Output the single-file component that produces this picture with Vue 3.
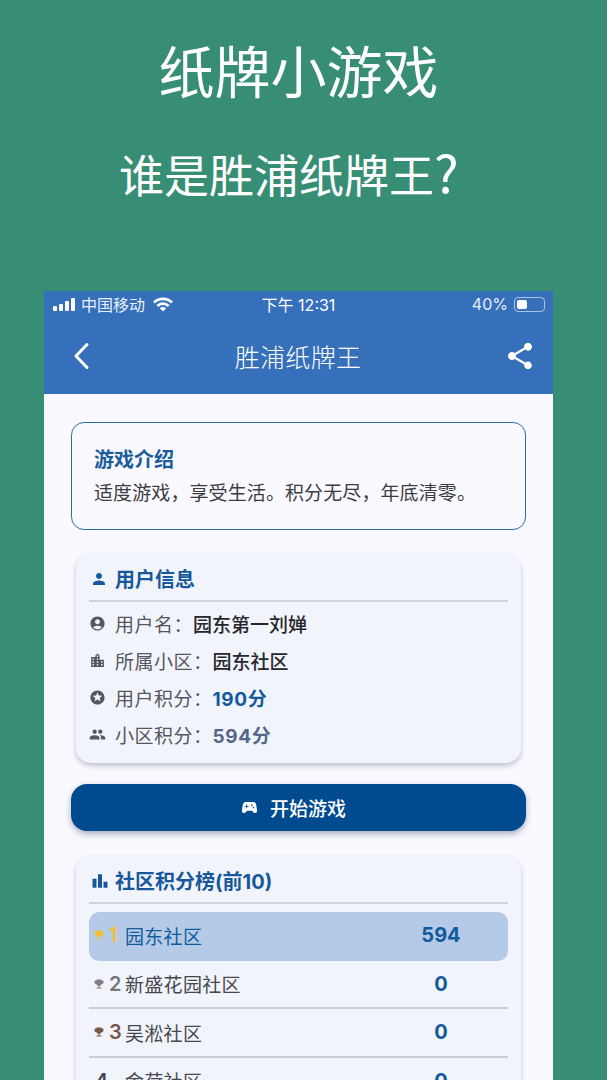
<template>
  <div class="page">
    <h1 class="headline">纸牌小游戏</h1>
    <h2 class="subline">谁是胜浦纸牌王<span class="qmark">?</span></h2>

    <div class="phone">
      <header class="topbar">
        <div class="status">
          <div class="status-left">
            <span class="signal"><i></i><i></i><i></i><i></i></span>
            <span>中国移动</span>
            <svg class="wifi" viewBox="0 0 24 18" width="20" height="15">
              <path d="M1.2 6.6a15.6 15.6 0 0 1 21.6 0" fill="none" stroke="#fff" stroke-width="3.2" />
              <path d="M5.2 10.7a10 10 0 0 1 13.6 0" fill="none" stroke="#fff" stroke-width="3.2" />
              <path d="M12 17.5l-3.8-3.8a5.2 5.2 0 0 1 7.6 0z" fill="#fff" />
            </svg>
          </div>
          <div class="status-time">下午 12:31</div>
          <div class="status-right">
            <span>40%</span>
            <span class="battery"><b></b></span>
          </div>
        </div>
        <div class="navbar">
          <svg viewBox="0 0 18 28" width="18" height="28">
            <path d="M15 2.5L4 14l11 11.5" fill="none" stroke="#fff" stroke-width="3" stroke-linecap="round" stroke-linejoin="round" />
          </svg>
          <span class="nav-title">胜浦纸牌王</span>
          <svg viewBox="0 0 24 24" width="32" height="32">
            <path d="M18 16.08c-.76 0-1.44.3-1.96.77L8.91 12.7c.05-.23.09-.46.09-.7s-.04-.47-.09-.7l7.05-4.11c.54.5 1.25.81 2.04.81 1.66 0 3-1.34 3-3s-1.34-3-3-3-3 1.34-3 3c0 .24.04.47.09.7L8.04 9.81C7.5 9.31 6.79 9 6 9c-1.66 0-3 1.34-3 3s1.34 3 3 3c.79 0 1.5-.31 2.04-.81l7.12 4.16c-.05.21-.08.43-.08.65 0 1.61 1.31 2.92 2.92 2.92 1.61 0 2.92-1.31 2.92-2.92s-1.31-2.92-2.92-2.92z" fill="#fff" />
          </svg>
        </div>
      </header>

      <main class="content">
        <section class="intro">
          <h3>游戏介绍</h3>
          <p>适度游戏，享受生活。积分无尽，年底清零。</p>
        </section>

        <section class="card user-card">
          <div class="card-title">
            <svg viewBox="0 0 24 24" width="18" height="18"><path :d="icons.person" /></svg>
            <span>用户信息</span>
          </div>
          <div class="info-list">
            <div v-for="row in userRows" :key="row.label" class="info-row">
              <svg viewBox="0 0 24 24" width="17" height="17"><path :d="row.icon" /></svg>
              <span class="info-label">{{ row.label }}：</span>
              <span class="info-value" :class="row.cls">{{ row.value }}</span>
            </div>
          </div>
        </section>

        <button class="start-btn">
          <svg viewBox="0 0 24 24" width="19" height="19"><path :d="icons.gamepad" /></svg>
          <span>开始游戏</span>
        </button>

        <section class="card rank-card">
          <div class="card-title">
            <svg viewBox="0 0 24 24" width="20" height="20"><path :d="icons.bars" /></svg>
            <span>社区积分榜(前10)</span>
          </div>
          <div v-for="item in ranks" :key="item.no" class="rank-row" :class="{ first: item.no === 1 }">
            <span class="cup-slot">
              <svg v-if="item.no < 4" class="cup" :class="'cup-' + item.no" viewBox="0 0 24 24" width="12" height="12"><path :d="icons.cup" /></svg>
            </span>
            <span class="rank-no" :class="'no-' + item.no">{{ item.no }}</span>
            <span class="rank-name">{{ item.name }}</span>
            <span class="rank-score">{{ item.score }}</span>
          </div>
        </section>
      </main>
    </div>
  </div>
</template>

<script setup>
const icons = {
  person: 'M12 12c2.21 0 4-1.79 4-4s-1.79-4-4-4-4 1.79-4 4 1.79 4 4 4zm0 2c-2.67 0-8 1.34-8 4v2h16v-2c0-2.66-5.33-4-8-4z',
  account: 'M12 2C6.48 2 2 6.48 2 12s4.48 10 10 10 10-4.48 10-10S17.52 2 12 2zm0 4c1.93 0 3.5 1.57 3.5 3.5S13.93 13 12 13s-3.5-1.57-3.5-3.5S10.07 6 12 6zm0 14c-2.03 0-4.43-.82-6.14-2.88C7.55 15.8 9.68 15 12 15s4.45.8 6.14 2.12C16.43 19.18 14.03 20 12 20z',
  city: 'M15 11V5l-3-3-3 3v2H3v14h18V11h-6zm-8 8H5v-2h2v2zm0-4H5v-2h2v2zm0-4H5V9h2v2zm6 8h-2v-2h2v2zm0-4h-2v-2h2v2zm0-4h-2V9h2v2zm0-4h-2V5h2v2zm6 12h-2v-2h2v2zm0-4h-2v-2h2v2z',
  star: 'M12 2C6.48 2 2 6.48 2 12s4.48 10 10 10 10-4.48 10-10S17.52 2 12 2zm4.2 15.4L12 14.9l-4.2 2.5 1.1-4.8-3.7-3.2 4.9-.4L12 4.5l1.9 4.5 4.9.4-3.7 3.2 1.1 4.8z',
  people: 'M16 11c1.66 0 2.99-1.34 2.99-3S17.66 5 16 5c-1.66 0-3 1.34-3 3s1.34 3 3 3zm-8 0c1.66 0 2.99-1.34 2.99-3S9.66 5 8 5C6.34 5 5 6.34 5 8s1.34 3 3 3zm0 2c-2.33 0-7 1.17-7 3.5V19h14v-2.5c0-2.33-4.67-3.5-7-3.5zm8 0c-.29 0-.62.02-.97.05 1.16.84 1.97 1.97 1.97 3.45V19h6v-2.5c0-2.33-4.67-3.5-7-3.5z',
  gamepad: 'M21.58 16.09l-1.09-7.66C20.21 6.46 18.52 5 16.53 5H7.47C5.48 5 3.79 6.46 3.51 8.43l-1.09 7.66C2.2 17.63 3.39 19 4.94 19c.68 0 1.32-.27 1.8-.75L9 16h6l2.25 2.25c.48.48 1.13.75 1.8.75 1.56 0 2.75-1.37 2.53-2.91zM11 11H9v2H8v-2H6v-1h2V8h1v2h2v1zm4-1c-.55 0-1-.45-1-1s.45-1 1-1 1 .45 1 1-.45 1-1 1zm2 3c-.55 0-1-.45-1-1s.45-1 1-1 1 .45 1 1-.45 1-1 1z',
  bars: 'M3 9.2h4.8V20H3zM9.6 4h4.8v16H9.6zM16.2 13H21v7h-4.8z',
  cup: 'M19 5h-2V3H7v2H5c-1.1 0-2 .9-2 2v1c0 2.55 1.92 4.63 4.39 4.94.63 1.5 1.98 2.63 3.61 2.96V19H7v2h10v-2h-4v-3.1c1.63-.33 2.98-1.46 3.61-2.96C19.08 12.63 21 10.55 21 8V7c0-1.1-.9-2-2-2z'
}

const userRows = [
  { icon: icons.account, label: '用户名', value: '园东第一刘婵' },
  { icon: icons.city, label: '所属小区', value: '园东社区' },
  { icon: icons.star, label: '用户积分', value: '190分', cls: 'blue' },
  { icon: icons.people, label: '小区积分', value: '594分', cls: 'slate' }
]

const ranks = [
  { no: 1, name: '园东社区', score: 594 },
  { no: 2, name: '新盛花园社区', score: 0 },
  { no: 3, name: '吴淞社区', score: 0 },
  { no: 4, name: '金荷社区', score: 0 }
]
</script>

<style>
html, body {
  margin: 0;
  background: #388e74;
}
</style>

<style scoped>
.page {
  width: 607px;
  height: 1080px;
  overflow: hidden;
  background: #388e74;
  font-family: "Inter", "Noto Sans CJK SC", sans-serif;
  color: #fff;
}

.headline {
  margin: 0;
  padding: 29px 10px 0 0;
  font-size: 56px;
  line-height: 80px;
  font-weight: 400;
  text-align: center;
  font-family: "Noto Sans CJK SC", sans-serif;
}

.subline {
  margin: 0;
  padding-top: 35px;
  padding-left: 119px;
  height: 60px;
  font-size: 45px;
  line-height: 60px;
  font-weight: 400;
  font-family: "Noto Sans CJK SC", sans-serif;
}

.qmark {
  font-size: 52px;
  line-height: 1;
}

.phone {
  width: 509px;
  margin: 87px 0 0 44px;
  background: #f9f9ff;
}

.topbar {
  height: 103px;
  background: #3670bb;
}

.status {
  height: 26px;
  padding: 0 9px;
  display: grid;
  grid-template-columns: 1fr auto 1fr;
  align-items: center;
  font-size: 16px;
  color: #e8effa;
}

.status-left {
  display: flex;
  align-items: center;
  gap: 6px;
}

.signal {
  display: inline-flex;
  align-items: flex-end;
  gap: 2px;
  height: 13px;
}

.signal i {
  width: 4px;
  background: #fff;
  border-radius: 1px;
}

.signal i:nth-child(1) { height: 5px; }
.signal i:nth-child(2) { height: 7px; }
.signal i:nth-child(3) { height: 10px; }
.signal i:nth-child(4) { height: 13px; }

.wifi {
  margin-left: 2px;
}

.status-time {
  color: #fff;
}

.status-right {
  display: flex;
  justify-content: flex-end;
  align-items: center;
  gap: 6px;
  margin-right: -1px;
}

.battery {
  width: 31px;
  height: 15px;
  box-sizing: border-box;
  border: 1px solid #a9c3e6;
  border-radius: 4px;
  padding: 2px;
  display: flex;
}

.battery b {
  width: 10px;
  background: #fff;
  border-radius: 2px;
}

.navbar {
  height: 77px;
  padding: 0 17px 0 28px;
  display: flex;
  align-items: center;
  justify-content: space-between;
}

.nav-title {
  font-size: 25px;
  letter-spacing: 0.3px;
  margin-left: 2px;
  font-family: "Noto Sans CJK SC", sans-serif;
  font-weight: 300;
  color: #fff;
}

.content {
  padding: 28px 27px 0;
}

.intro {
  box-sizing: border-box;
  height: 108px;
  padding: 22px 22px 0;
  border: 1.5px solid #2c6ca4;
  border-radius: 13px;
}

.intro h3 {
  margin: 0;
  font-size: 20px;
  line-height: 30px;
  font-weight: 700;
  color: #1a5c9c;
}

.intro p {
  margin: 6px 0 0;
  font-size: 19px;
  line-height: 26px;
  letter-spacing: 0.1px;
  color: #3c3c42;
}

.card {
  margin: 0 5px;
  padding: 0 13px;
  background: #f2f4fb;
  border-radius: 15px;
  box-shadow: 0 3px 5px rgba(60, 64, 80, 0.28);
}

.card svg path {
  fill: currentColor;
}

.user-card {
  margin-top: 23px;
  height: 210px;
  box-sizing: border-box;
}

.card-title {
  height: 49px;
  box-sizing: border-box;
  padding-top: 4px;
  display: flex;
  align-items: center;
  gap: 7px;
  border-bottom: 2px solid #cfd2dc;
  font-size: 20px;
  font-weight: 700;
  color: #17589a;
}

.card-title svg {
  margin-left: 1px;
}

.info-list {
  padding-top: 3px;
}

.info-row {
  height: 37px;
  display: flex;
  align-items: center;
  font-size: 19px;
  color: #55565e;
}

.info-row svg {
  margin-right: 9px;
  flex: none;
}

.info-label {
  letter-spacing: 0.5px;
}

.info-value {
  color: #26272c;
  font-weight: 500;
}

.info-value.blue {
  color: #125a9e;
  font-weight: 700;
  letter-spacing: 0.6px;
}

.info-value.slate {
  color: #55678a;
  font-weight: 700;
  letter-spacing: 0.6px;
}

.start-btn {
  margin-top: 21px;
  width: 100%;
  height: 47px;
  padding: 0 11px 0 0;
  border: 0;
  border-radius: 16px;
  background: #004b8f;
  color: #fff;
  font-family: inherit;
  font-size: 19px;
  font-weight: 500;
  display: flex;
  align-items: center;
  justify-content: center;
  gap: 11px;
  box-shadow: 0 3px 6px rgba(20, 40, 80, 0.35);
}

.start-btn svg path {
  fill: #fff;
}

.rank-card {
  margin-top: 24px;
  height: 400px;
  box-sizing: border-box;
}

.rank-card .card-title {
  gap: 5px;
}

.rank-row {
  height: 48.5px;
  display: flex;
  align-items: center;
  font-size: 19px;
  color: #45474e;
  border-bottom: 2px solid #cbcdd6;
  box-sizing: border-box;
  padding-left: 4px;
}

.rank-row.first {
  margin-top: 8px;
  background: #b5cae6;
  border-radius: 10px;
  color: #125a9e;
  border-bottom-color: transparent;
}

.cup-slot {
  width: 16px;
  flex: none;
  display: flex;
}

.cup-1 { color: #f5c02c; }
.cup-2 { color: #7d7f86; }
.cup-3 { color: #77564c; }

.rank-no {
  width: 16px;
  flex: none;
  font-weight: 600;
  font-size: 20px;
}

.no-1 { color: #f5c02c; }
.no-2 { color: #75777e; }
.no-3 { color: #77564c; }
.no-4 {
  width: 32px;
  margin-left: -16px;
  padding-left: 2px;
  box-sizing: border-box;
  color: #45474e;
}

.rank-name {
  flex: 1;
  letter-spacing: 0.3px;
}

.rank-score {
  width: 40px;
  margin-right: 47px;
  text-align: center;
  font-size: 20px;
  font-weight: 700;
  color: #125a9e;
}
</style>
